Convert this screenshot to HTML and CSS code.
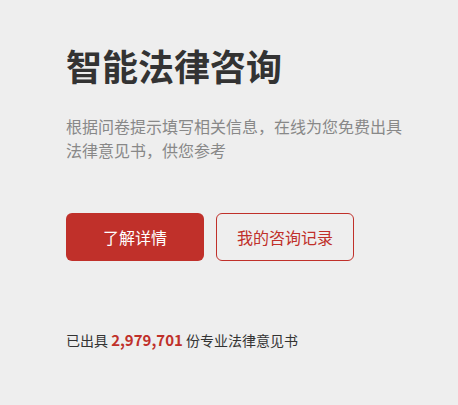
FILE: index.html
```html
<!DOCTYPE html>
<html lang="zh-CN">

<head>
    <meta charset="UTF-8">
    <meta name="viewport" content="width=device-width, initial-scale=1.0">
    <title>智能法律咨询</title>
    <link rel="stylesheet" href="styles.css">
</head>

<body>
    <section class="intro">
        <h1>智能法律咨询</h1>
        <p class="desc">根据问卷提示填写相关信息，在线为您免费出具法律意见书，供您参考</p>

        <div class="actions">
            <a class="btn btn-primary" href="#">了解详情</a>
            <a class="btn btn-outline" href="#">我的咨询记录</a>
        </div>

        <p class="stats">已出具 <strong>2,979,701</strong> 份专业法律意见书</p>
    </section>
</body>

</html>
```

FILE: styles.css
```css
* {
    margin: 0;
    padding: 0;
    box-sizing: border-box;
}

body {
    font-family: "Noto Sans CJK SC", "Noto Sans", sans-serif;
    background: #eeeeee;
    color: #333;
}

.intro {
    padding: 38px 56px 0 66px;
}

h1 {
    font-size: 36px;
    font-weight: 700;
    line-height: 54px;
    color: #333;
}

.desc {
    margin-top: 22px;
    font-size: 16px;
    line-height: 24px;
    color: #888;
    max-width: 340px;
}

.actions {
    display: flex;
    gap: 12px;
    margin-top: 51px;
}

.btn {
    display: flex;
    align-items: center;
    justify-content: center;
    width: 138px;
    height: 48px;
    border-radius: 6px;
    font-size: 16px;
    text-decoration: none;
}

.btn-primary {
    background: #c0302a;
    color: #fff;
}

.btn-outline {
    border: 1px solid #c0302a;
    color: #c0302a;
}

.stats {
    margin-top: 69px;
    font-size: 14px;
    line-height: 20px;
    color: #333;
}

.stats strong {
    color: #c0302a;
    font-size: 15px;
}
```
